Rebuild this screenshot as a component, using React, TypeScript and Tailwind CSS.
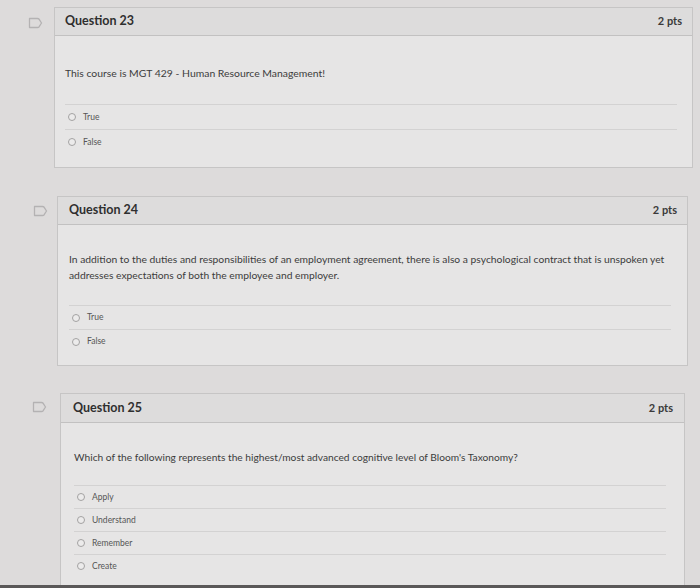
import React from "react";

type Question = {
  num: number;
  text: string[];
  answers: string[];
  wrap: string;
  flag: string;
  head: string;
  body: string;
  textBox: string;
  row: string;
  bottom: string;
};

const questions: Question[] = [
  {
    num: 23,
    text: ["This course is MGT 429 - Human Resource Management!"],
    answers: ["True", "False"],
    wrap: "pl-[28px] pr-[7px]",
    flag: "pt-[10px] w-[26px]",
    head: "h-[28px] pl-[10px] pr-[10px]",
    body: "pl-[10px] pr-[15px]",
    textBox: "text-[10.4px] leading-[14px] pt-[30px] pb-[24px]",
    row: "h-[25px]",
    bottom: "h-[13px]",
  },
  {
    num: 24,
    text: [
      "In addition to the duties and responsibilities of an employment agreement, there is also a psychological contract that is unspoken yet",
      "addresses expectations of both the employee and employer.",
    ],
    answers: ["True", "False"],
    wrap: "pl-[33px] pr-[12px] pt-[28px]",
    flag: "pt-[9px] w-[24px]",
    head: "h-[28px] pl-[11px] pr-[10px]",
    body: "pl-[11px] pr-[16px]",
    textBox: "text-[10.3px] leading-[16px] pt-[26px] pb-[22px]",
    row: "h-[24px]",
    bottom: "h-[12px]",
  },
  {
    num: 25,
    text: ["Which of the following represents the highest/most advanced cognitive level of Bloom's Taxonomy?"],
    answers: ["Apply", "Understand", "Remember", "Create"],
    wrap: "pl-[32px] pr-[15px] pt-[27px]",
    flag: "pt-[8px] w-[28px]",
    head: "h-[29px] pl-[12px] pr-[11px]",
    body: "pl-[13px] pr-[18px]",
    textBox: "text-[10.2px] leading-[15px] pt-[27px] pb-[20px]",
    row: "h-[23px]",
    bottom: "h-[11px]",
  },
];

const Flag = () => (
  <svg width="15" height="12" viewBox="0 0 15 12" fill="none">
    <path
      d="M1.5 1.5 H9.5 Q10.5 1.5 11.2 2.3 L13.5 6 L11.2 9.7 Q10.5 10.5 9.5 10.5 H1.5 Z"
      stroke="#b4b2b3"
      strokeWidth="1.3"
      strokeLinejoin="round"
    />
  </svg>
);

const QuestionCard = ({ q }: { q: Question }) => (
  <div className={`flex ${q.wrap}`}>
    <div className={`shrink-0 ${q.flag}`}>
      <Flag />
    </div>
    <div className="flex-1 border border-[#c6c5c5] bg-[#e6e5e5]">
      <div className={`flex items-center justify-between border-b border-[#c2c1c1] bg-[#dddcdc] ${q.head}`}>
        <span className="text-[12.5px] font-bold text-[#2f2f2f]">Question {q.num}</span>
        <span className="text-[11px] font-bold text-[#3a3a3a]">2 pts</span>
      </div>
      <div className={q.body}>
        <div className={`text-[#3c3c3c] ${q.textBox}`}>
          {q.text.map((line) => (
            <div key={line}>{line}</div>
          ))}
        </div>
        {q.answers.map((a) => (
          <div key={a} className={`flex items-center gap-[7px] border-t border-[#d3d2d2] pl-[3px] ${q.row}`}>
            <span className="h-[8px] w-[8px] rounded-full border border-[#a3a2a2] bg-[#ecebeb]" />
            <span className="text-[8.5px] text-[#555]">{a}</span>
          </div>
        ))}
        <div className={q.bottom} />
      </div>
    </div>
  </div>
);

export default function App() {
  return (
    <div
      className="relative h-[588px] w-[700px] overflow-hidden bg-[#dddbdb] pt-[7px]"
      style={{ fontFamily: "Lato, 'Open Sans', sans-serif" }}
    >
      {questions.map((q) => (
        <QuestionCard key={q.num} q={q} />
      ))}
      <div className="absolute bottom-0 left-0 h-[3px] w-full bg-[#5a5858]" />
    </div>
  );
}
